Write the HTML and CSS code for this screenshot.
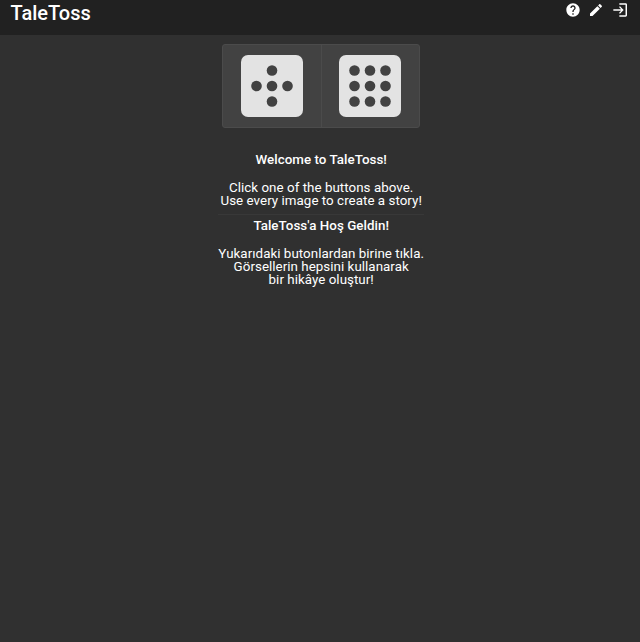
FILE: index.html
```html
<!DOCTYPE html>
<html lang="en">
<head>
<meta charset="utf-8">
<title>TaleToss</title>
<link rel="stylesheet" href="styles.css">
</head>
<body>
<header class="bar">
  <h1 class="brand">TaleToss</h1>
  <nav class="actions">
    <svg class="icon" viewBox="0 0 24 24"><path d="M12 2C6.48 2 2 6.48 2 12s4.480 10 10 10 10-4.480 10-10S17.520 2 12 2zm1 17h-2v-2h2v2zm2.070-7.750l-.9.920C13.450 12.900 13 13.500 13 15h-2v-.5c0-1.100.45-2.100 1.170-2.830l1.240-1.260c.37-.36.59-.86.59-1.410 0-1.100-.9-2-2-2s-2 .9-2 2H8c0-2.210 1.790-4 4-4s4 1.790 4 4c0 .88-.36 1.680-.93 2.250z"/></svg>
    <svg class="icon" viewBox="0 0 24 24"><path d="M3 17.250V21h3.750L17.810 9.940l-3.750-3.750L3 17.250zM20.710 7.040c.39-.39.39-1.020 0-1.410l-2.340-2.340c-.39-.39-1.020-.39-1.410 0l-1.830 1.830 3.750 3.750 1.830-1.830z"/></svg>
    <svg class="icon" viewBox="0 0 24 24"><path d="M10.500 7.500 12 6.200 17.500 12 12 17.800l-1.500-1.300L13.700 13H2v-2h11.700zM20 2H11v2.200h9.300v15.600H11V22h9.500c1.100 0 2-.9 2-2V4c0-1.100-.9-2-2-2z"/></svg>
  </nav>
</header>
<main class="page">
  <div class="group">
    <button class="roll" aria-label="5">
      <svg class="die" viewBox="0 0 62 62"><rect class="face" width="62" height="62" rx="7"/><circle cx="31" cy="15.500" r="5.300"/><circle cx="15.500" cy="31" r="5.300"/><circle cx="31" cy="31" r="5.300"/><circle cx="46.500" cy="31" r="5.300"/><circle cx="31" cy="46.500" r="5.300"/></svg>
    </button>
    <button class="roll" aria-label="9">
      <svg class="die" viewBox="0 0 62 62"><rect class="face" width="62" height="62" rx="7"/><circle cx="15.500" cy="15.500" r="5.300"/><circle cx="31" cy="15.500" r="5.300"/><circle cx="46.500" cy="15.500" r="5.300"/><circle cx="15.500" cy="31" r="5.300"/><circle cx="31" cy="31" r="5.300"/><circle cx="46.500" cy="31" r="5.300"/><circle cx="15.500" cy="46.500" r="5.300"/><circle cx="31" cy="46.500" r="5.300"/><circle cx="46.500" cy="46.500" r="5.300"/></svg>
    </button>
  </div>
  <section class="intro">
    <h2>Welcome to TaleToss!</h2>
    <p>Click one of the buttons above.<br>Use every image to create a story!</p>
  </section>
  <section class="intro second" lang="tr">
    <h2>TaleToss'a Hoş Geldin!</h2>
    <p>Yukarıdaki butonlardan birine tıkla.<br>Görsellerin hepsini kullanarak<br>bir hikâye oluştur!</p>
  </section>
</main>
</body>
</html>
```
FILE: styles.css
```css
* { box-sizing: border-box; }
body {
  margin: 0;
  min-height: 100vh;
  background: #303030;
  color: #fff;
  font-family: Roboto, sans-serif;
}
.bar {
  display: flex;
  justify-content: space-between;
  align-items: flex-start;
  height: 34.500px;
  padding: 0 12px 0 10.500px;
  background: #212121;
}
.brand {
  margin: 1px 0 0;
  font-size: 20px;
  line-height: 24px;
  font-weight: 500;
}
.actions { display: flex; gap: 7.600px; padding-top: 2.300px; }
.icon { display: block; width: 16px; height: 16px; fill: #fff; }
.page {
  display: flex;
  flex-direction: column;
  align-items: center;
  padding: 9.900px 0 0 2.400px;
}
.group {
  display: flex;
  width: 197.500px;
  height: 84px;
  border: 1px solid #4b4b4b;
  border-radius: 3px;
  background: #424242;
}
.roll {
  display: flex;
  flex: 1;
  align-items: center;
  justify-content: center;
  padding: 0;
  border: 0;
  background: none;
}
.roll + .roll { border-left: 1px solid #4b4b4b; }
.die { width: 62px; height: 62px; fill: #424242; }
.face { fill: #e3e3e3; }
.intro {
  width: 206px;
  margin-top: 25px;
  padding-bottom: 7.600px;
  border-bottom: 1px solid #383838;
  font-size: 13.350px;
  line-height: 13px;
  letter-spacing: 0.040px;
  text-align: center;
  white-space: nowrap;
}
.second { margin-top: 4px; border-bottom: 0; }
.intro h2 { margin: 0 0 14.400px; font-size: inherit; font-weight: 500; }
.intro p { margin: 0; }
```
